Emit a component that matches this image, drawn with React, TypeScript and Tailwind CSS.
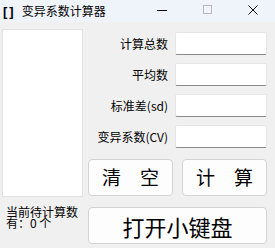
import React from "react";

const font = { fontFamily: '"Noto Sans CJK SC", "Liberation Sans", sans-serif' };

function Field({ label }: { label: string }) {
  return (
    <div className="flex items-center h-[23px]">
      <div className="w-[78px] text-right text-[12px] leading-none text-black">{label}</div>
      <input className="ml-[7px] w-[92px] h-[23px] bg-white border border-[#e5e5e5] border-b-[#8a8a8a] rounded-[2px] outline-none" />
    </div>
  );
}

export default function App() {
  return (
    <div className="w-[275px] h-[248px] bg-[#f0f0f0] flex flex-col overflow-hidden" style={font}>
      <div className="h-[22px] bg-[#eff3fa] flex items-center text-[12px] text-black relative">
        <span className="ml-[3px] font-bold text-[13px] leading-none tracking-[2px]" style={{ fontFamily: '"Liberation Sans", sans-serif' }}>[]</span>
        <span className="ml-[6px] leading-none">变异系数计算器</span>
        <div className="absolute left-[157px] top-[10px] w-[10px] h-[1px] bg-black" />
        <div className="absolute left-[203px] top-[5px] w-[9px] h-[9px] border border-[#b8b8b8]" />
        <svg className="absolute left-[248px] top-[5px]" width="10" height="10" viewBox="0 0 10 10">
          <path d="M0.5 0.5 L9.5 9.5 M9.5 0.5 L0.5 9.5" stroke="#111" strokeWidth="1" />
        </svg>
      </div>
      <div className="flex flex-1">
        <div className="w-[88px] pl-[2px] pt-[7px] flex flex-col">
          <div className="w-[81px] h-[168px] bg-white border border-[#e3e3e3]" />
          <div className="mt-[9px] pl-[4px] w-[84px] text-[12px] leading-[11px] text-black">
            当前待计算数有：0 个
          </div>
        </div>
        <div className="flex flex-col pt-[10px]">
          <div className="flex flex-col gap-[8px] pl-[2px]">
            <Field label="计算总数" />
            <Field label="平均数" />
            <Field label="标准差(sd)" />
            <Field label="变异系数(CV)" />
          </div>
          <div className="flex gap-[9px] mt-[11px]">
            <button className="w-[85px] h-[37px] bg-[#fdfdfd] border border-[#d3d3d3] rounded-[4px] text-[19px] text-black">
              清　空
            </button>
            <button className="w-[85px] h-[37px] bg-[#fdfdfd] border border-[#d3d3d3] rounded-[4px] text-[19px] text-black">
              计　算
            </button>
          </div>
          <button className="mt-[11px] w-[179px] h-[37px] bg-[#fdfdfd] border border-[#d3d3d3] rounded-[4px] text-[22px] text-black leading-none">
            打开小键盘
          </button>
        </div>
      </div>
    </div>
  );
}
